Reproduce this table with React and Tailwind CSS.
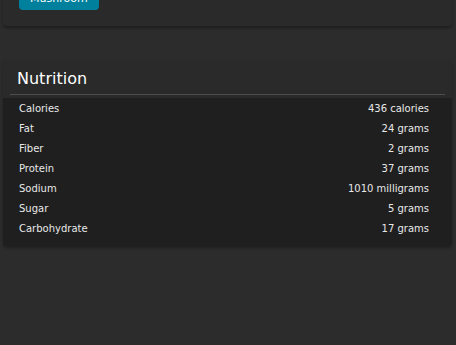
import React from 'react';

const nutrition = [
  { name: 'Calories', value: '436 calories' },
  { name: 'Fat', value: '24 grams' },
  { name: 'Fiber', value: '2 grams' },
  { name: 'Protein', value: '37 grams' },
  { name: 'Sodium', value: '1010 milligrams' },
  { name: 'Sugar', value: '5 grams' },
  { name: 'Carbohydrate', value: '17 grams' },
];

const App = () => {
  return (
    <div
      className="min-h-[345px] w-[456px] overflow-hidden bg-[#2c2c2c] pl-[3px] pr-[4px] text-[#e8e8e8]"
      style={{ fontFamily: '"DejaVu Sans", Verdana, sans-serif' }}
    >
      {/* ingredients card (scrolled off) */}
      <div className="-mt-[32px] rounded-b bg-[#2a2a2a] px-4 pb-4 pt-4 shadow-[0_2px_3px_rgba(0,0,0,0.35)]">
        <button className="h-[26px] rounded bg-[#00809c] px-[11px] pt-[2px] text-[11px] leading-[26px] text-white">
          Mushroom
        </button>
      </div>

      {/* nutrition card */}
      <div className="mt-[34px] rounded bg-[#2a2a2a] shadow-[0_2px_3px_rgba(0,0,0,0.3)]">
        <div className="px-[7px] pt-[7px]">
          <h2 className="px-[7px] text-[16px] leading-[24px] text-white">Nutrition</h2>
          <div className="mt-[3px] h-[1px] bg-[#4c4c4c]"></div>
        </div>
        <div className="mt-[3px] rounded-b bg-[#1f1f1f] pb-[8px] pt-0">
          {nutrition.map((row) => (
            <div key={row.name} className="flex h-[20px] items-center justify-between px-4 text-[10px]">
              <span>{row.name}</span>
              <span className="pr-[7px]">{row.value}</span>
            </div>
          ))}
        </div>
      </div>
    </div>
  );
};

export default App;
